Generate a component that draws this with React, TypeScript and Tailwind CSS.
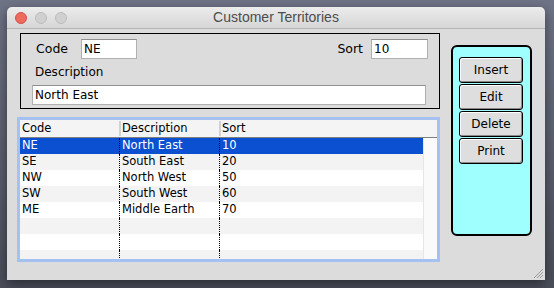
import React from "react";

const rows = [
  { code: "NE", desc: "North East", sort: "10" },
  { code: "SE", desc: "South East", sort: "20" },
  { code: "NW", desc: "North West", sort: "50" },
  { code: "SW", desc: "South West", sort: "60" },
  { code: "ME", desc: "Middle Earth", sort: "70" },
  { code: "", desc: "", sort: "" },
  { code: "", desc: "", sort: "" },
  { code: "", desc: "", sort: "" },
];

function Btn({ label }: { label: string }) {
  return (
    <div className="h-[26px] w-[64px] flex items-center justify-center rounded-[3px] border border-black bg-[#dedede] shadow-[inset_1px_1px_0_#ffffff,inset_-1px_-1px_0_#8c8c8c] text-[12px] text-black">
      {label}
    </div>
  );
}

export default function App() {
  const body = { fontFamily: '"DejaVu Sans", Verdana, sans-serif' };
  return (
    <div className="w-[554px] h-[288px] overflow-hidden bg-gradient-to-b from-[#6e7386] to-[#4a4e59] pt-[7px] pl-[7px]">
      <div
        className="relative w-[538px] h-[273px] rounded-t-[5px] overflow-hidden flex flex-col shadow-[0_4px_12px_rgba(0,0,0,0.45)]"
        style={body}
      >
        {/* Title bar */}
        <div className="relative h-[22px] shrink-0 bg-gradient-to-b from-[#ececec] to-[#d6d6d6] border-b border-[#b4b4b4] flex items-center justify-center">
          <div className="absolute left-[8px] top-[5px] flex gap-[8px]">
            <div className="w-[12px] h-[12px] rounded-full bg-[#ec6a5e] border border-[#d25247]" />
            <div className="w-[12px] h-[12px] rounded-full bg-[#d0d0d0] border border-[#bcbcbc]" />
            <div className="w-[12px] h-[12px] rounded-full bg-[#d0d0d0] border border-[#bcbcbc]" />
          </div>
          <span
            className="text-[14px] text-[#4d4d4d]"
            style={{ fontFamily: '"Liberation Sans", Arial, sans-serif' }}
          >
            Customer Territories
          </span>
        </div>

        {/* Body */}
        <div className="relative flex-1 bg-[#dcdcdc] flex items-start pl-[10px] pt-[4px]">
          {/* Left column */}
          <div className="w-[423px] flex flex-col">
            {/* Group box */}
            <div className="ml-[3px] w-[420px] border border-black flex flex-col pt-[5px] pb-[3px] text-[12px] text-black">
              <div className="h-[20px] flex items-center pl-[15px] pr-[11px]">
                <span className="w-[45px] text-[12.5px]">Code</span>
                <div className="w-[56px] h-[20px] bg-white border border-[#b0b0b0] border-t-[#8f8f8f] flex items-center pl-[2px]">
                  NE
                </div>
                <div className="flex-1" />
                <span className="text-[12.5px]">Sort</span>
                <div className="ml-[8px] w-[57px] h-[20px] bg-white border border-[#b0b0b0] border-t-[#8f8f8f] flex items-center pl-[2px]">
                  10
                </div>
              </div>
              <div className="h-[26px] flex items-center pl-[14px] text-[12px]">Description</div>
              <div className="ml-[11px] w-[394px] h-[20px] bg-white border border-[#b0b0b0] border-t-[#8f8f8f] flex items-center pl-[2px]">
                North East
              </div>
            </div>

            {/* Table */}
            <div className="mt-[8px] w-[423px] h-[145px] border-[3px] border-[#a5c1f2] bg-white flex overflow-hidden text-[11.5px]">
              <div className="flex-1 flex flex-col overflow-hidden">
                <div className="h-[18px] shrink-0 bg-[#f4f4f4] border-b border-[#7f7f7f] flex items-center">
                  <div className="w-[99px] pl-[2px]">Code</div>
                  <div className="w-[2px] h-[15px] bg-[#d2d2d2]" />
                  <div className="w-[98px] pl-[1px]">Description</div>
                  <div className="w-[2px] h-[15px] bg-[#d2d2d2]" />
                  <div className="flex-1 pl-[1px]">Sort</div>
                </div>
                <div className="flex">
                  <div className="w-[403px] flex flex-col">
                    {rows.map((r, i) => {
                      const sel = i === 0;
                      const bg = sel ? "bg-[#0b50d0] text-white" : i % 2 === 1 ? "bg-[#f3f3f3] text-black" : "bg-white text-black";
                      return (
                        <div key={i} className={`h-[16px] shrink-0 flex items-center ${bg}`}>
                          <div className="w-[100px] h-full pl-[2px] border-r border-dotted border-black flex items-center">
                            {r.code}
                          </div>
                          <div className="w-[100px] h-full pl-[2px] border-r border-dotted border-black flex items-center">
                            {r.desc}
                          </div>
                          <div className="flex-1 pl-[2px]">{r.sort}</div>
                        </div>
                      );
                    })}
                  </div>
                  <div className="w-[14px] bg-[#fafafa] border-l border-[#e6e6e6]" />
                </div>
              </div>
            </div>
          </div>

          {/* Button panel */}
          <div className="ml-[11px] mt-[12px] w-[81px] h-[191px] border-2 border-black rounded-[6px] bg-[#9ffefe] flex flex-col items-start pl-[6px] pt-[10px] gap-[1px]">
            <Btn label="Insert" />
            <Btn label="Edit" />
            <Btn label="Delete" />
            <Btn label="Print" />
          </div>

          {/* Resize grip */}
          <svg className="absolute right-[2px] bottom-[2px]" width="10" height="10" viewBox="0 0 10 10">
            <line x1="1" y1="10" x2="10" y2="1" stroke="#9a9a9a" strokeWidth="1" />
            <line x1="4" y1="10" x2="10" y2="4" stroke="#9a9a9a" strokeWidth="1" />
            <line x1="7" y1="10" x2="10" y2="7" stroke="#9a9a9a" strokeWidth="1" />
          </svg>
        </div>
      </div>
    </div>
  );
}
